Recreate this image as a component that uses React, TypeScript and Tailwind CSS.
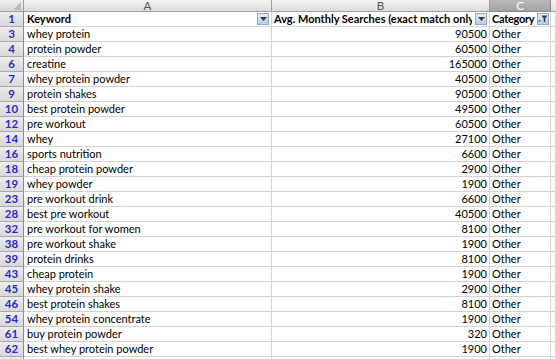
import React from 'react';

const rows: [number, string, number][] = [
  [3, 'whey protein', 90500],
  [4, 'protein powder', 60500],
  [6, 'creatine', 165000],
  [7, 'whey protein powder', 40500],
  [9, 'protein shakes', 90500],
  [10, 'best protein powder', 49500],
  [12, 'pre workout', 60500],
  [14, 'whey', 27100],
  [16, 'sports nutrition', 6600],
  [18, 'cheap protein powder', 2900],
  [19, 'whey powder', 1900],
  [23, 'pre workout drink', 6600],
  [28, 'best pre workout', 40500],
  [32, 'pre workout for women', 8100],
  [38, 'pre workout shake', 1900],
  [39, 'protein drinks', 8100],
  [43, 'cheap protein', 1900],
  [45, 'whey protein shake', 2900],
  [46, 'best protein shakes', 8100],
  [54, 'whey protein concentrate', 1900],
  [61, 'buy protein powder', 320],
  [62, 'best whey protein powder', 1900],
];

const cols = 'grid grid-cols-[24px_248px_218px_61px_5px]';
const cell = 'h-[15px] border-b border-r border-[#d4d4d4] overflow-hidden whitespace-nowrap leading-[14px]';
const rowHead =
  'h-[15px] border-b border-r border-b-[#a9a9a9] border-r-[#8c8c8c] bg-gradient-to-b from-[#ececec] to-[#d8d8d8] text-center text-[#2b2bd0] font-bold text-[11.5px] leading-[14px]';
const colHead = 'h-[12px] border-b border-r text-center text-[11.5px] leading-[11px]';

const FilterButton = () => (
  <span className="absolute right-[2px] top-[1px] w-[12px] h-[12px] border border-[#8ea9c6] bg-gradient-to-b from-[#e6eef7] to-[#b9cde3] flex items-center justify-center">
    <svg width="7" height="4" viewBox="0 0 7 4">
      <path d="M0 0h7L3.5 4z" fill="#3a3a3a" />
    </svg>
  </span>
);

const FunnelButton = () => (
  <span className="absolute right-[1px] top-[1px] w-[12px] h-[12px] border border-[#8ea9c6] bg-gradient-to-b from-[#e6eef7] to-[#b9cde3] flex items-center justify-center">
    <svg width="10" height="8" viewBox="0 0 10 8">
      <path d="M0 5.5h3L1.5 7z" fill="#3a3a3a" />
      <path d="M3.5 0.5h6L7.3 3.5v4L5.7 6.5V3.5z" fill="#3a3a3a" />
    </svg>
  </span>
);

export default function App() {
  return (
    <div
      className="w-[556px] h-[359px] overflow-hidden bg-white text-[11px] text-black"
      style={{ fontFamily: 'Lato, "Liberation Sans", sans-serif' }}
    >
      {/* column letters */}
      <div className={cols}>
        <div className="h-[12px] border-b border-r border-[#a0a0a0] bg-gradient-to-b from-[#efefef] to-[#d6d6d6] relative">
          <svg className="absolute right-[2px] bottom-[1px]" width="8" height="8" viewBox="0 0 8 8">
            <path d="M8 0v8H0z" fill="#bdbdbd" />
          </svg>
        </div>
        <div className={`${colHead} border-[#a0a0a0] bg-gradient-to-b from-[#f2f2f2] to-[#dcdcdc] text-[#555]`}>A</div>
        <div className={`${colHead} border-[#a0a0a0] bg-gradient-to-b from-[#f2f2f2] to-[#dcdcdc] text-[#555]`}>B</div>
        <div className={`${colHead} border-[#8a8a8a] bg-gradient-to-b from-[#b9b9b9] to-[#a3a3a3] text-white`}>C</div>
        <div className="h-[12px] border-b border-[#a0a0a0] bg-gradient-to-b from-[#f2f2f2] to-[#dcdcdc]" />
      </div>

      {/* header row */}
      <div className={cols}>
        <div className={rowHead}>1</div>
        <div className={`${cell} relative font-bold pl-[3px]`}>
          Keyword
          <FilterButton />
        </div>
        <div className={`${cell} relative font-bold pl-[2px]`}>
          <span className="block w-[198px] overflow-hidden">Avg. Monthly Searches (exact match only)</span>
          <FilterButton />
        </div>
        <div className={`${cell} relative font-bold pl-[2px] tracking-[-0.3px]`}>
          Category
          <FunnelButton />
        </div>
        <div className={cell} />
      </div>

      {rows.map(([n, kw, vol]) => (
        <div key={n} className={cols}>
          <div className={rowHead}>{n}</div>
          <div className={`${cell} pl-[3px]`}>{kw}</div>
          <div className={`${cell} text-right pr-[2px]`}>{vol}</div>
          <div className={`${cell} pl-[2px]`}>Other</div>
          <div className={cell} />
        </div>
      ))}

      <div className={cols}>
        <div className={rowHead} />
        <div className={cell} />
        <div className={cell} />
        <div className={cell} />
        <div className={cell} />
      </div>
    </div>
  );
}
